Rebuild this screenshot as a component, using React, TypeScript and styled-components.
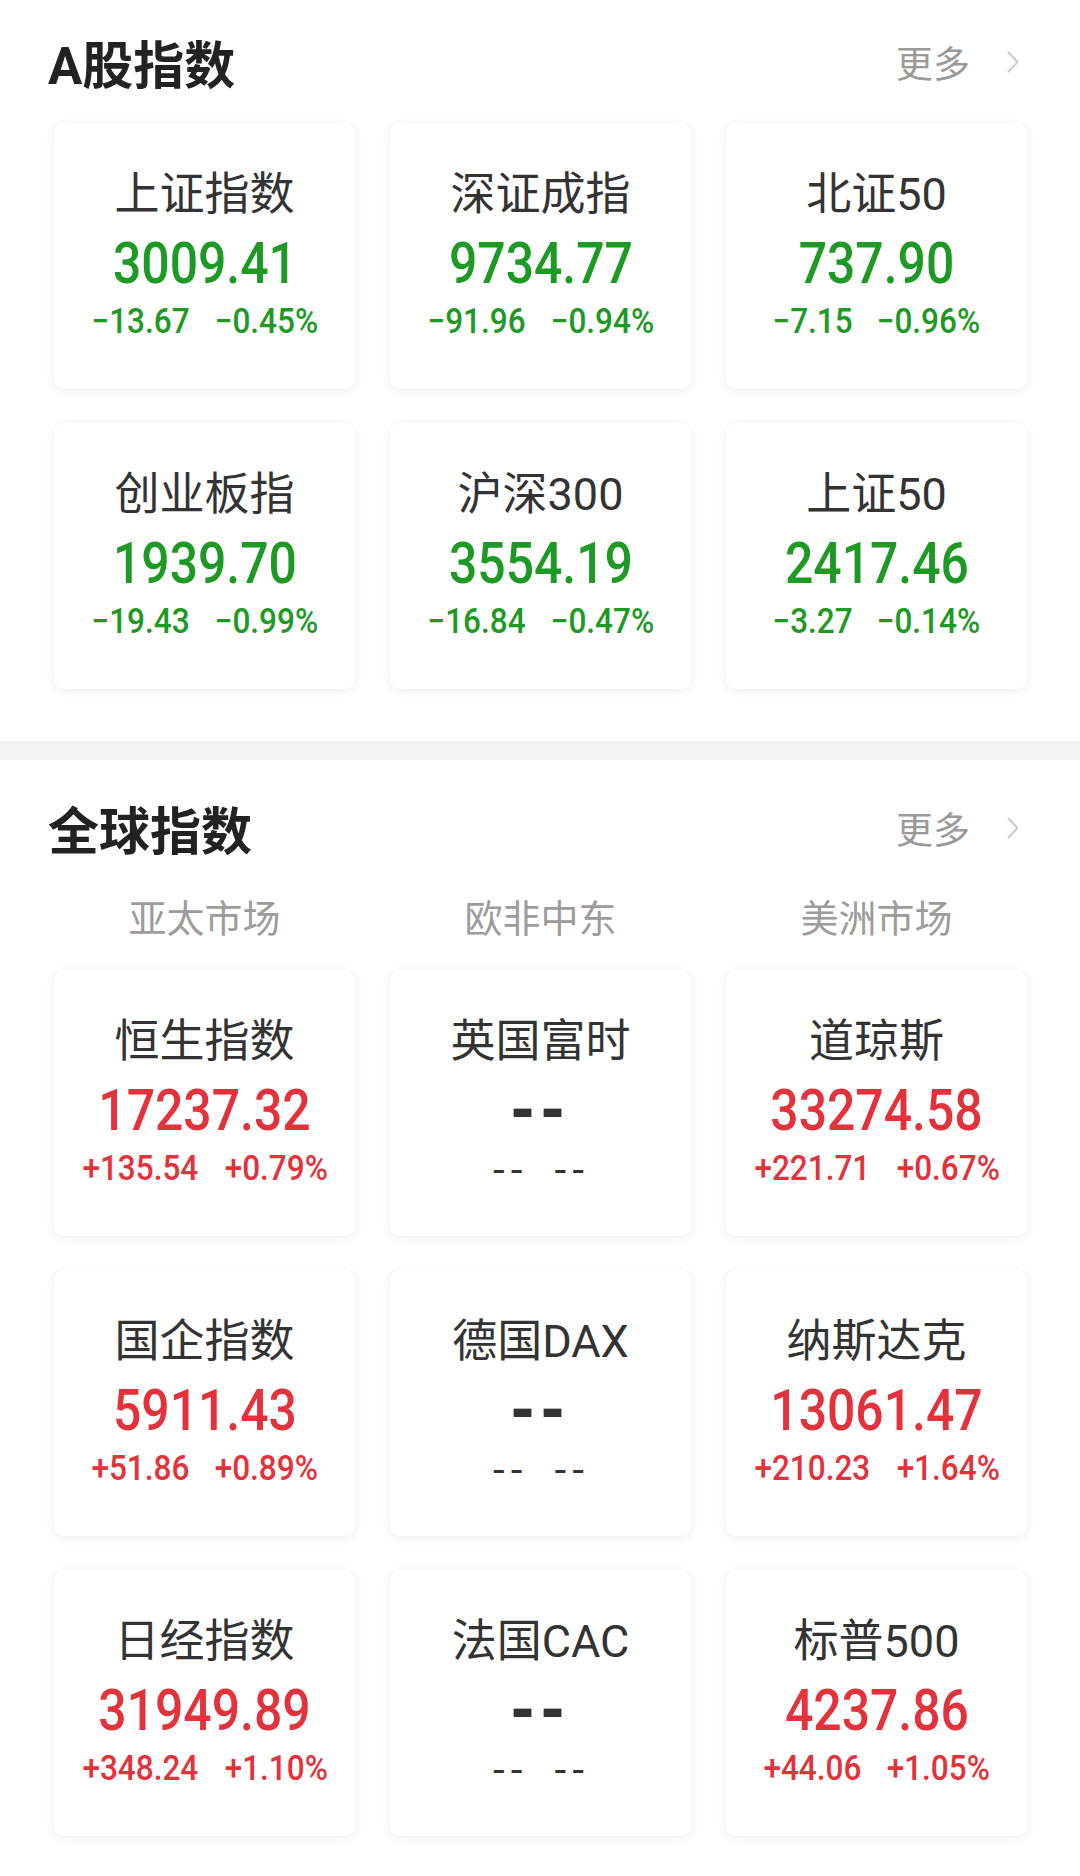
import * as React from "react";
import styled, { createGlobalStyle } from "styled-components";

type Quote = {
  name: string;
  value?: string;
  change?: string;
  percent?: string;
  trend?: "up" | "down";
};

const A_SHARES: Quote[] = [
  { name: "上证指数", value: "3009.41", change: "−13.67", percent: "−0.45%", trend: "down" },
  { name: "深证成指", value: "9734.77", change: "−91.96", percent: "−0.94%", trend: "down" },
  { name: "北证50", value: "737.90", change: "−7.15", percent: "−0.96%", trend: "down" },
  { name: "创业板指", value: "1939.70", change: "−19.43", percent: "−0.99%", trend: "down" },
  { name: "沪深300", value: "3554.19", change: "−16.84", percent: "−0.47%", trend: "down" },
  { name: "上证50", value: "2417.46", change: "−3.27", percent: "−0.14%", trend: "down" },
];

const GLOBAL: Quote[] = [
  { name: "恒生指数", value: "17237.32", change: "+135.54", percent: "+0.79%", trend: "up" },
  { name: "英国富时" },
  { name: "道琼斯", value: "33274.58", change: "+221.71", percent: "+0.67%", trend: "up" },
  { name: "国企指数", value: "5911.43", change: "+51.86", percent: "+0.89%", trend: "up" },
  { name: "德国DAX" },
  { name: "纳斯达克", value: "13061.47", change: "+210.23", percent: "+1.64%", trend: "up" },
  { name: "日经指数", value: "31949.89", change: "+348.24", percent: "+1.10%", trend: "up" },
  { name: "法国CAC" },
  { name: "标普500", value: "4237.86", change: "+44.06", percent: "+1.05%", trend: "up" },
];

const MARKETS = ["亚太市场", "欧非中东", "美洲市场"];

function Chevron() {
  return (
    <svg width="14" height="24" viewBox="0 0 14 24" fill="none">
      <path d="M2.5 2.5 L11.5 12 L2.5 21.5" stroke="#cccccc" strokeWidth="2" strokeLinecap="round" strokeLinejoin="round" />
    </svg>
  );
}

function QuoteCard({ q }: { q: Quote }) {
  if (!q.value) {
    return (
      <Card>
        <Name>{q.name}</Name>
        <EmptyValue>--</EmptyValue>
        <EmptyChange>
          <span>--</span>
          <span>--</span>
        </EmptyChange>
      </Card>
    );
  }
  return (
    <Card>
      <Name>{q.name}</Name>
      <Value trend={q.trend!}>
        <span>{q.value}</span>
      </Value>
      <Change trend={q.trend!}>
        <span>{q.change}</span>
        <span>{q.percent}</span>
      </Change>
    </Card>
  );
}

function SectionHeader({ title }: { title: string }) {
  return (
    <Header>
      <Title>{title}</Title>
      <More>
        更多
        <Chevron />
      </More>
    </Header>
  );
}

export default function App() {
  return (
    <Page>
      <GlobalStyle />
      <Section>
        <SectionHeader title="A股指数" />
        <Grid>
          {A_SHARES.map((q) => (
            <QuoteCard key={q.name} q={q} />
          ))}
        </Grid>
      </Section>
      <Divider />
      <Section className="global">
        <SectionHeader title="全球指数" />
        <Tabs>
          {MARKETS.map((m) => (
            <Tab key={m}>{m}</Tab>
          ))}
        </Tabs>
        <Grid>
          {GLOBAL.map((q) => (
            <QuoteCard key={q.name} q={q} />
          ))}
        </Grid>
      </Section>
    </Page>
  );
}

const GlobalStyle = createGlobalStyle`
  body {
    margin: 0;
    background: #fff;
    font-family: Roboto, "Noto Sans CJK SC", sans-serif;
  }
`;

const Page = styled.div`
  width: 1080px;
  background: #fff;
`;

const Section = styled.section`
  padding: 33px 53px 52px 54px;
  &.global {
    padding-top: 39px;
  }
`;

const Header = styled.div`
  display: flex;
  justify-content: space-between;
  align-items: center;
  height: 58px;
  margin-left: -6px;
  margin-right: 7px;
`;

const Title = styled.h2`
  margin: 0;
  font-size: 51px;
  font-weight: 700;
  color: #222;
  font-family: Roboto, "Noto Sans CJK SC", sans-serif;
`;

const More = styled.div`
  display: flex;
  align-items: center;
  gap: 36px;
  font-size: 37px;
  color: #9a9a9a;
  font-family: "Noto Sans CJK SC", sans-serif;
`;

const Tabs = styled.div`
  display: grid;
  grid-template-columns: repeat(3, 1fr);
  column-gap: 35px;
  margin-top: 36px;
  margin-bottom: 31px;
`;

const Tab = styled.div`
  text-align: center;
  font-size: 38px;
  line-height: 46px;
  color: #9c9c9c;
  font-family: "Noto Sans CJK SC", sans-serif;
`;

const Grid = styled.div`
  display: grid;
  grid-template-columns: repeat(3, 301px);
  column-gap: 35px;
  row-gap: 34px;
  margin-top: 32px;
  .global & {
    margin-top: 0;
  }
`;

const Card = styled.div`
  height: 266px;
  border-radius: 10px;
  background: #fff;
  box-shadow: 0 2px 12px rgba(0, 0, 0, 0.07);
  display: flex;
  flex-direction: column;
  align-items: center;
  padding-top: 45px;
  box-sizing: border-box;
`;

const Name = styled.div`
  font-size: 45px;
  line-height: 53px;
  color: #333;
  font-family: Roboto, "Noto Sans CJK SC", sans-serif;
`;

const Value = styled.div<{ trend: "up" | "down" }>`
  margin-top: 12px;
  height: 60px;
  line-height: 60px;
  font-size: 58px;
  font-weight: 500;
  color: ${(p) => (p.trend === "up" ? "#e3323b" : "#1c9a24")};
  span {
    display: inline-block;
    transform: scaleX(0.86);
  }
`;

const Change = styled.div<{ trend: "up" | "down" }>`
  margin-top: 9px;
  display: flex;
  gap: 14px;
  font-size: 35px;
  font-weight: 500;
  line-height: 40px;
  color: ${(p) => (p.trend === "up" ? "#e3323b" : "#1c9a24")};
  span {
    display: inline-block;
    transform: scaleX(0.9);
  }
`;

const EmptyValue = styled.div`
  margin-top: 12px;
  height: 60px;
  line-height: 60px;
  font-size: 58px;
  font-weight: 700;
  letter-spacing: 6px;
  color: #333;
  font-family: "DejaVu Sans", sans-serif;
`;

const EmptyChange = styled.div`
  margin-top: 9px;
  display: flex;
  gap: 26px;
  font-size: 38px;
  line-height: 40px;
  letter-spacing: 4px;
  color: #333;
  font-family: "DejaVu Sans", sans-serif;
`;

const Divider = styled.div`
  height: 19px;
  background: #f3f3f3;
`;
